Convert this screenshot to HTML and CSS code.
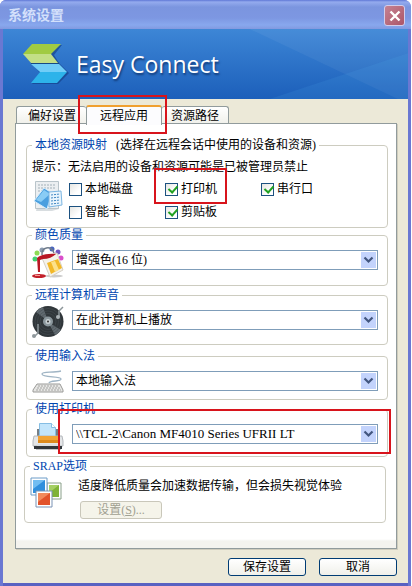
FILE: index.html
```html
<!DOCTYPE html>
<html lang="zh-CN">
<head>
<meta charset="utf-8">
<title>系统设置</title>
<link rel="stylesheet" href="styles.css">
</head>
<body>
<div class="window">
  <header class="titlebar">
    <h1>系统设置</h1>
    <button class="close" type="button" aria-label="关闭">
      <svg width="12" height="12" viewBox="0 0 12 12"><path d="M1.5 1.5l9 9M10.500 1.500l-9 9" stroke="#fff" stroke-width="2.400"/></svg>
    </button>
  </header>
  <div class="client">
    <div class="banner">
      <svg class="rays" viewBox="0 0 200 70" preserveAspectRatio="none" aria-hidden="true">
        <path d="M43 0L200 75V0z" fill="#fff" opacity=".05"/>
        <path d="M63 70L200 24V70z" fill="#58b0f0" opacity=".13"/>
      </svg>
      <svg class="logo" width="46" height="44" viewBox="0 0 46 44" aria-hidden="true">
        <path d="M10 3h29l-8 10 5 8 10 10-11 11H9l8-11-7-8L1 13z" fill="#123a80" opacity=".6"/>
        <path d="M9 2h29L28 12H0z" fill="#a0cb42"/>
        <path d="M0 12h28l7 9H8z" fill="#c2df86"/>
        <path d="M8 22h28l8 8H17z" fill="#70cdf7"/>
        <path d="M17 30h27L34 41H8z" fill="#2db3ea"/>
        <path d="M8 21.500h28" stroke="#174a86"/>
      </svg>
      <span class="brand">Easy Connect</span>
    </div>
    <nav class="tabs">
      <button type="button" class="tab tab-first">偏好设置</button>
      <button type="button" class="tab active">远程应用<span class="mark mark-tab"></span></button>
      <button type="button" class="tab tab-last">资源路径</button>
    </nav>
    <main class="panel">
      <fieldset class="group devices">
        <legend>本地资源映射 <span class="note">(选择在远程会话中使用的设备和资源)</span></legend>
        <p class="hint">提示：无法启用的设备和资源可能是已被管理员禁止</p>
        <div class="device-row">
          <svg width="32" height="34" viewBox="0 0 32 34" aria-hidden="true">
            <path d="M4 31h16l7-2v-2H5z" fill="#d8dde0"/>
            <path d="M3.500 1.500h23v27h-23z" fill="#eceff1" stroke="#b9c4ca"/>
            <path d="M6 5h18M6 8h18M6 11h10" stroke="#a3b0b8" stroke-dasharray="2 1"/>
            <path d="M12 8l8 5-5 16L2 21z" fill="#4b9fdf" stroke="#d6edfc"/>
            <path d="M12 10l6 4-9 8-5-2z" fill="#89ccf5"/>
            <path d="M17 12l12-1 1 14-13 2z" fill="#e9f5fd" stroke="#7db6e2"/>
            <path d="M19 15l9-1M19 18l9-1M19 21l9-1M19 24l9-1" stroke="#4288c4" stroke-dasharray="2 1"/>
          </svg>
          <div class="checks">
            <label><input type="checkbox">本地磁盘</label>
            <label class="marked"><input type="checkbox" checked>打印机<span class="mark mark-check"></span></label>
            <label><input type="checkbox" checked>串行口</label>
            <label><input type="checkbox">智能卡</label>
            <label><input type="checkbox" checked>剪贴板</label>
          </div>
        </div>
      </fieldset>

      <fieldset class="group tall">
        <legend><label for="color">颜色质量</label></legend>
        <div class="row">
          <svg width="32" height="32" viewBox="0 0 32 32" aria-hidden="true">
            <circle cx="3" cy="13" r="2.500" fill="#43cf72"/><circle cx="5" cy="7" r="2.500" fill="#8edb54"/>
            <circle cx="10" cy="4" r="2.500" fill="#8c9bb0"/><circle cx="20" cy="3" r="2.500" fill="#4964bd"/>
            <circle cx="26" cy="6" r="2.500" fill="#7254c0"/><circle cx="29" cy="12" r="2.500" fill="#d94fcb"/>
            <path d="M10 9C9 1 19-1 22 7" fill="none" stroke="#6f7b8a" stroke-width="1.500"/>
            <ellipse cx="22" cy="30" rx="9" ry="1.500" fill="#ccc"/>
            <path d="M10 12L25 7l6 17-13 7z" fill="#f4f1e9" stroke="#d5d0c5"/>
            <path d="M15 17l11-4 4 9-11 6z" fill="#f2b828"/><path d="M19 16l4-1 4 9-4 2z" fill="#fce18a"/>
            <path d="M5 12c4-4 14-5 19-4-3 3-8 5-13 5l-3 1v12H6z" fill="#b81724"/>
            <ellipse cx="7" cy="30" rx="7" ry="2" fill="#c3202a"/><path d="M3 29.500h5" stroke="#f39a94"/>
          </svg>
          <div class="combo"><select id="color"><option>增强色(16 位)</option></select>
            <svg class="drop" width="15" height="16" viewBox="0 0 15 16" aria-hidden="true"><path d="M0 0h15v16H0z" fill="#c3d3fc"/><path d="M3.500 5.500l4 4 4-4" fill="none" stroke="#42567f" stroke-width="2.200"/></svg></div>
        </div>
      </fieldset>

      <fieldset class="group sound">
        <legend><label for="sound">远程计算机声音</label></legend>
        <div class="row">
          <svg width="32" height="32" viewBox="0 0 32 32" aria-hidden="true">
            <circle cx="16" cy="15.500" r="15.500" fill="#30363a"/>
            <path d="M16 15L4 6A15 15 0 0 1 11 1zM16 16l13 8a15 15 0 0 1-6 5z" fill="#616a70"/>
            <g fill="none" stroke="#454d52" stroke-width=".6"><circle cx="16" cy="15.500" r="13"/><circle cx="16" cy="15.500" r="10.500"/><circle cx="16" cy="15.500" r="8"/></g>
            <circle cx="16" cy="15.500" r="5" fill="#8b979d"/><circle cx="16" cy="15.500" r="2.500" fill="#c9d1d4"/><circle cx="16" cy="15.500" r="1" fill="#333"/>
            <path d="M31 1l-4 4v6M2 31l4-4V18" fill="none" stroke="#8c9599" stroke-width="1.500"/>
            <circle cx="26" cy="11" r="2" fill="#aab2b5"/><circle cx="2" cy="30" r="2" fill="#8f989c"/>
          </svg>
          <div class="combo"><select id="sound"><option>在此计算机上播放</option></select>
            <svg class="drop" width="15" height="16" viewBox="0 0 15 16" aria-hidden="true"><path d="M0 0h15v16H0z" fill="#c3d3fc"/><path d="M3.500 5.500l4 4 4-4" fill="none" stroke="#42567f" stroke-width="2.200"/></svg></div>
        </div>
      </fieldset>

      <fieldset class="group">
        <legend><label for="ime">使用输入法</label></legend>
        <div class="row">
          <svg width="32" height="32" viewBox="0 0 32 32" aria-hidden="true">
            <path d="M17 16c1-3 12-1 12-4 0-3-19-1-19-5 0-3 10-1 19-3" fill="none" stroke="#9fb4c4" stroke-width="1.300"/>
            <path d="M5 17h23l3 6v2H1v-2z" fill="#e6e6e4" stroke="#9a9a98"/>
            <path d="M6 19h21M5 21h23M4 23h25" stroke="#a5a5a3" stroke-dasharray="2 1"/>
          </svg>
          <div class="combo"><select id="ime"><option>本地输入法</option></select>
            <svg class="drop" width="15" height="16" viewBox="0 0 15 16" aria-hidden="true"><path d="M0 0h15v16H0z" fill="#c3d3fc"/><path d="M3.500 5.500l4 4 4-4" fill="none" stroke="#42567f" stroke-width="2.200"/></svg></div>
        </div>
      </fieldset>

      <fieldset class="group print">
        <legend><label for="printer">使用打印机</label></legend>
        <div class="row">
          <svg width="32" height="32" viewBox="0 0 32 32" aria-hidden="true">
            <path d="M5 9h21v12H5z" fill="#777f86"/>
            <path d="M7.500 3.500h12l4 4V18h-16z" fill="#c3e5fb" stroke="#85bde3"/><path d="M19.500 3.500v4h4" fill="#fff" stroke="#85bde3"/>
            <path d="M2 16h28l1 5v5H1v-5z" fill="#e4e6e8" stroke="#b4b8bc"/>
            <path d="M6 16h20v5H6z" fill="#f2a436"/><path d="M6 20h20v3H6z" fill="#dc8a1d"/>
            <path d="M2 26h28v3H2z" fill="#30353a"/><path d="M5 24h22v2H5z" fill="#d9dde0"/><path d="M4 29h25v1H4z" fill="#c2c5c8"/>
          </svg>
          <div class="combo"><select id="printer" class="latin"><option>\\TCL-2\Canon MF4010 Series UFRII LT</option></select>
            <svg class="drop" width="15" height="16" viewBox="0 0 15 16" aria-hidden="true"><path d="M0 0h15v16H0z" fill="#c3d3fc"/><path d="M3.500 5.500l4 4 4-4" fill="none" stroke="#42567f" stroke-width="2.200"/></svg>
            <span class="mark mark-combo"></span></div>
        </div>
      </fieldset>

      <fieldset class="group srap">
        <legend>SRAP选项</legend>
        <div class="row">
          <svg width="32" height="32" viewBox="0 0 32 32" aria-hidden="true">
            <path d="M17 6h14v16H17z" fill="#fff" stroke="#8aa08a"/><path d="M19 8h10v12H19z" fill="#7fb336"/><path d="M19 8h10L19 16z" fill="#a5cf63"/>
            <path d="M1 1h16v17H1z" fill="#fff" stroke="#6d9cc8"/><path d="M3 3h12v13H3z" fill="#2f8fdd"/><path d="M3 3h12L3 12z" fill="#71bdf2"/>
            <path d="M6 14h16v16H6z" fill="#fff" stroke="#7a93b5"/><path d="M8 16h12v12H8z" fill="#e2532b"/><path d="M8 16h12L8 25z" fill="#f28a5c"/>
          </svg>
          <div class="srap-body">
            <p>适度降低质量会加速数据传输，但会损失视觉体验</p>
            <button type="button" class="setup" disabled>设置(<u>S</u>)...</button>
          </div>
        </div>
      </fieldset>
    </main>
    <footer class="actions">
      <button type="button">保存设置</button>
      <button type="button">取消</button>
    </footer>
  </div>
</div>
</body>
</html>
```
FILE: styles.css
```css
* { box-sizing: border-box; }

body {
  margin: 0;
  background: #fff;
  color: #000;
  font: 12px/14px "Liberation Serif", "Noto Sans CJK SC", serif;
}

button, select, input { font: inherit; color: inherit; margin: 0; }
p { margin: 0; }
svg { display: block; flex: none; }

.window {
  display: flex;
  flex-direction: column;
  min-height: 100vh;
  margin-right: 1px;
  border-radius: 6px 7px 0 0;
  background: #6a78d2;
  overflow: hidden;
}

.titlebar {
  display: flex;
  align-items: center;
  justify-content: space-between;
  height: 29px;
  padding: 2px 6px 0 8px;
  background: linear-gradient(#5f78d6 0, #94abee 2px, #7b95df 7px, #7d97e2 18px, #88a8ee 25px, #8299e0 29px);
}

.titlebar h1 {
  margin: 0;
  font-size: 14px;
  font-weight: bold;
  line-height: 20px;
  color: #d3e0fb;
}

.close {
  display: grid;
  place-items: center;
  width: 21px;
  height: 21px;
  padding: 0;
  border: 1px solid #d3cdea;
  border-radius: 3px;
  background: linear-gradient(135deg, #c58292, #ac5568);
}

.client {
  flex: 1;
  display: flex;
  flex-direction: column;
  margin: 0 3px;
  border-bottom: 3px solid #5962c2;
  background: #ece9d8;
}

.banner {
  position: relative;
  display: flex;
  align-items: center;
  gap: 7px;
  height: 70px;
  padding-left: 20px;
  background: linear-gradient(#3d86d6, #1c5fba);
}

.rays {
  position: absolute;
  top: 0;
  right: 0;
  width: 50%;
  height: 100%;
}

.brand {
  font-family: "Open Sans", sans-serif;
  font-size: 23px;
  line-height: 32px;
  color: #fff;
  text-shadow: 1px 2px 2px #133c78;
}

.tabs {
  display: flex;
  align-items: flex-end;
  height: 25px;
  padding-left: 13px;
}

.tab {
  height: 18px;
  padding: 0 11px;
  border: 1px solid #919b9c;
  border-bottom: 0;
  border-radius: 3px 3px 0 0;
  background: linear-gradient(#fff, #f0f0ea);
  white-space: nowrap;
}

.tab-first { padding-right: 10px; border-right: 0; }
.tab-last { padding: 0 9px; border-left: 0; }

.tab.active {
  position: relative;
  height: 20px;
  margin-bottom: -1px;
  padding: 0 13px;
  border-top: 2px solid #f0a030;
  background: #fcfcfe;
  z-index: 1;
}

.panel {
  flex: 1;
  display: flex;
  flex-direction: column;
  margin: -1px 11px 0 12px;
  padding: 14px 8px 0 10px;
  border: 1px solid #919b9c;
  box-shadow: 1px 1px 0 #cfccbd;
  background: linear-gradient(to top, #f4f3ee 7px, #fff 9px);
}

.group {
  min-width: 0;
  min-height: 51px;
  margin: 0 0 2px;
  padding: 0 9px 0 5px;
  border: 1px solid #cdccc0;
  border-radius: 4px;
}

.group legend {
  padding: 0 3px;
  color: #0046b0;
}

.devices { min-height: 90px; margin-bottom: 0; }
.tall { min-height: 58px; }
.sound { min-height: 57px; margin-bottom: 4px; }
.print { min-height: 55px; }
.srap { min-height: 64px; margin: 0 2px 0 -2px; }

.note { margin-left: 6px; color: #000; }
.hint { padding-top: 8px; }

.device-row {
  display: flex;
  gap: 5px;
  padding-top: 6px;
}

.checks {
  display: grid;
  grid-template-columns: repeat(3, 96px);
  grid-auto-rows: 14px;
  row-gap: 9px;
  padding-top: 2px;
}

.checks label {
  position: relative;
  display: flex;
  align-items: center;
  gap: 3px;
}

.checks input {
  appearance: none;
  width: 13px;
  height: 13px;
  border: 1px solid #1c5180;
  background: linear-gradient(135deg, #e6e6e2, #fff 70%);
}

.checks input:checked::before {
  content: "";
  display: block;
  width: 4px;
  height: 7px;
  margin: 0 0 0 4px;
  border: solid #21a121;
  border-width: 0 2px 2px 0;
  transform: rotate(42deg);
}

.row {
  display: flex;
  gap: 8px;
  padding-top: 4px;
}

.combo {
  position: relative;
  flex: 1;
  height: 20px;
  margin-top: 4px;
}

.combo select {
  appearance: none;
  display: block;
  width: 100%;
  height: 20px;
  padding: 0 20px 0 3px;
  border: 1px solid #7f9db9;
  border-radius: 0;
  background: #fff;
}

.combo .latin { font-size: 13px; }

.drop {
  position: absolute;
  top: 2px;
  right: 2px;
  pointer-events: none;
}

.srap-body { padding: 2px 0 0 8px; }

.setup {
  display: block;
  width: 82px;
  height: 18px;
  margin: 8px 0 0 2px;
  padding: 0;
  border: 1px solid #c9c7ba;
  border-radius: 3px;
  background: #f5f4ea;
  color: #a1a192;
}

.actions {
  display: flex;
  justify-content: flex-end;
  gap: 13px;
  padding: 9px 11px 7px;
}

.actions button {
  width: 78px;
  height: 18px;
  padding: 0;
  border: 1px solid #003c74;
  border-radius: 3px;
  background: linear-gradient(#fff, #f0f0ea);
}

.mark {
  position: absolute;
  border: 2px solid #d8141c;
  pointer-events: none;
}

.mark-tab { inset: -12px -6px -9px -9px; }
.mark-check { inset: -14px 34px -8px -11px; }
.mark-combo { inset: -15px -13px -10px -14px; }
```
